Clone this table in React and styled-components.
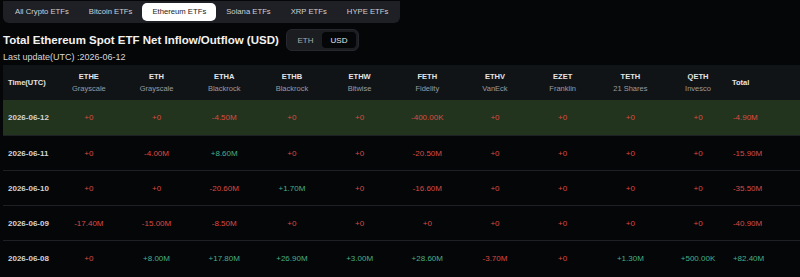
import React from 'react'
import styled, { createGlobalStyle } from 'styled-components'

const GlobalStyle = createGlobalStyle`
  html, body {
    margin: 0;
    padding: 0;
    background: #050608;
    font-family: 'Liberation Sans', Arial, sans-serif;
    overflow: hidden;
  }
`;

const tabs = ['All Crypto ETFs', 'Bitcoin ETFs', 'Ethereum ETFs', 'Solana ETFs', 'XRP ETFs', 'HYPE ETFs']

const columns = [
  { code: 'ETHE', issuer: 'Grayscale' },
  { code: 'ETH', issuer: 'Grayscale' },
  { code: 'ETHA', issuer: 'Blackrock' },
  { code: 'ETHB', issuer: 'Blackrock' },
  { code: 'ETHW', issuer: 'Bitwise' },
  { code: 'FETH', issuer: 'Fidelity' },
  { code: 'ETHV', issuer: 'VanEck' },
  { code: 'EZET', issuer: 'Franklin' },
  { code: 'TETH', issuer: '21 Shares' },
  { code: 'QETH', issuer: 'Invesco' },
]

const rows = [
  { date: '2026-06-12', values: ['+0', '+0', '-4.50M', '+0', '+0', '-400.00K', '+0', '+0', '+0', '+0'], total: '-4.90M', today: true },
  { date: '2026-06-11', values: ['+0', '-4.00M', '+8.60M', '+0', '+0', '-20.50M', '+0', '+0', '+0', '+0'], total: '-15.90M' },
  { date: '2026-06-10', values: ['+0', '+0', '-20.60M', '+1.70M', '+0', '-16.60M', '+0', '+0', '+0', '+0'], total: '-35.50M' },
  { date: '2026-06-09', values: ['-17.40M', '-15.00M', '-8.50M', '+0', '+0', '+0', '+0', '+0', '+0', '+0'], total: '-40.90M' },
  { date: '2026-06-08', values: ['+0', '+8.00M', '+17.80M', '+26.90M', '+3.00M', '+28.60M', '-3.70M', '+0', '+1.30M', '+500.00K'], total: '+82.40M' },
]

// "+0" counts as no inflow, shown red like the outflows
const isUp = (v) => v.startsWith('+') && v !== '+0'

function App() {
  return (
    <Page>
      <GlobalStyle />
      <TabBar>
        {tabs.map((t) => (
          <Tab key={t} active={t === 'Ethereum ETFs'}>{t}</Tab>
        ))}
      </TabBar>
      <TitleRow>
        <Title>Total Ethereum Spot ETF Net Inflow/Outflow (USD)</Title>
        <Toggle>
          <ToggleOption>ETH</ToggleOption>
          <ToggleOption active>USD</ToggleOption>
        </Toggle>
      </TitleRow>
      <Updated>Last update(UTC) :2026-06-12</Updated>
      <Table>
        <HeadRow>
          <HeadCell left>Time(UTC)</HeadCell>
          {columns.map((c) => (
            <HeadCell key={c.code}>
              {c.code}
              <Issuer>{c.issuer}</Issuer>
            </HeadCell>
          ))}
          <HeadCell left total>Total</HeadCell>
        </HeadRow>
        {rows.map((r) => (
          <Row key={r.date} today={r.today}>
            <DateCell>{r.date}</DateCell>
            {r.values.map((v, i) => (
              <Value key={i} up={isUp(v)}>{v}</Value>
            ))}
            <Value up={isUp(r.total)} total>{r.total}</Value>
          </Row>
        ))}
      </Table>
    </Page>
  )
}

export default App

const Page = styled.div`
  width: 800px;
  height: 277px;
  padding-left: 3px;
  box-sizing: border-box;
  background: #050608;
  overflow: hidden;
`;

const TabBar = styled.div`
  display: inline-flex;
  align-items: center;
  height: 22px;
  padding: 0 2px;
  box-sizing: border-box;
  background: #1e2025;
  border-radius: 0 0 6px 6px;
`;

const Tab = styled.div`
  height: 18px;
  line-height: 18px;
  padding: 0 10px;
  font-size: 7.7px;
  border-radius: 5px;
  color: ${(p) => (p.active ? '#1a1a1a' : '#cfd1d4')};
  background: ${(p) => (p.active ? '#ffffff' : 'transparent')};
`;

const TitleRow = styled.div`
  display: flex;
  align-items: center;
  gap: 7px;
  margin-top: 6px;
`;

const Title = styled.h1`
  margin: 0;
  font-size: 11.5px;
  font-weight: 700;
  color: #f2f2f2;
  white-space: nowrap;
`;

const Toggle = styled.div`
  display: flex;
  align-items: center;
  width: 73px;
  height: 22px;
  padding: 2px;
  box-sizing: border-box;
  background: #1b1d21;
  border: 1px solid #26282d;
  border-radius: 6px;
`;

const ToggleOption = styled.div`
  flex: 1;
  height: 100%;
  display: flex;
  align-items: center;
  justify-content: center;
  font-size: 8px;
  border-radius: 4px;
  color: ${(p) => (p.active ? '#e6e6e6' : '#a9abaf')};
  background: ${(p) => (p.active ? '#050608' : 'transparent')};
`;

const Updated = styled.div`
  margin-top: 1px;
  font-size: 9px;
  color: #d6d7d9;
`;

const Table = styled.div`
  margin-top: 3px;
  width: 797px;
`;

const grid = `
  display: grid;
  grid-template-columns: 52px repeat(10, 67.7px) 1fr;
  align-items: center;
`;

const HeadRow = styled.div`
  ${grid}
  height: 35px;
  background: #111417;
`;

const HeadCell = styled.div`
  display: flex;
  flex-direction: column;
  align-items: ${(p) => (p.left ? 'flex-start' : 'center')};
  gap: 3px;
  padding-left: ${(p) => (p.left && !p.total ? '5px' : '0')};
  font-size: 7.5px;
  font-weight: 700;
  color: #e4e5e7;
`;

const Issuer = styled.span`
  font-weight: 400;
  color: #9a9ca0;
`;

const Row = styled.div`
  ${grid}
  height: 35px;
  background: ${(p) => (p.today ? '#22341d' : 'transparent')};
  border-top: ${(p) => (p.today ? 'none' : '1px solid #1d2024')};
  box-sizing: border-box;
`;

const DateCell = styled.div`
  padding-left: 5px;
  font-size: 8px;
  font-weight: 700;
  color: #d4d5d7;
`;

const Value = styled.div`
  text-align: ${(p) => (p.total ? 'left' : 'center')};
  padding-left: ${(p) => (p.total ? '1px' : '0')};
  font-size: 8px;
  color: ${(p) => (p.up ? '#46b08a' : '#dc4a43')};
`;
